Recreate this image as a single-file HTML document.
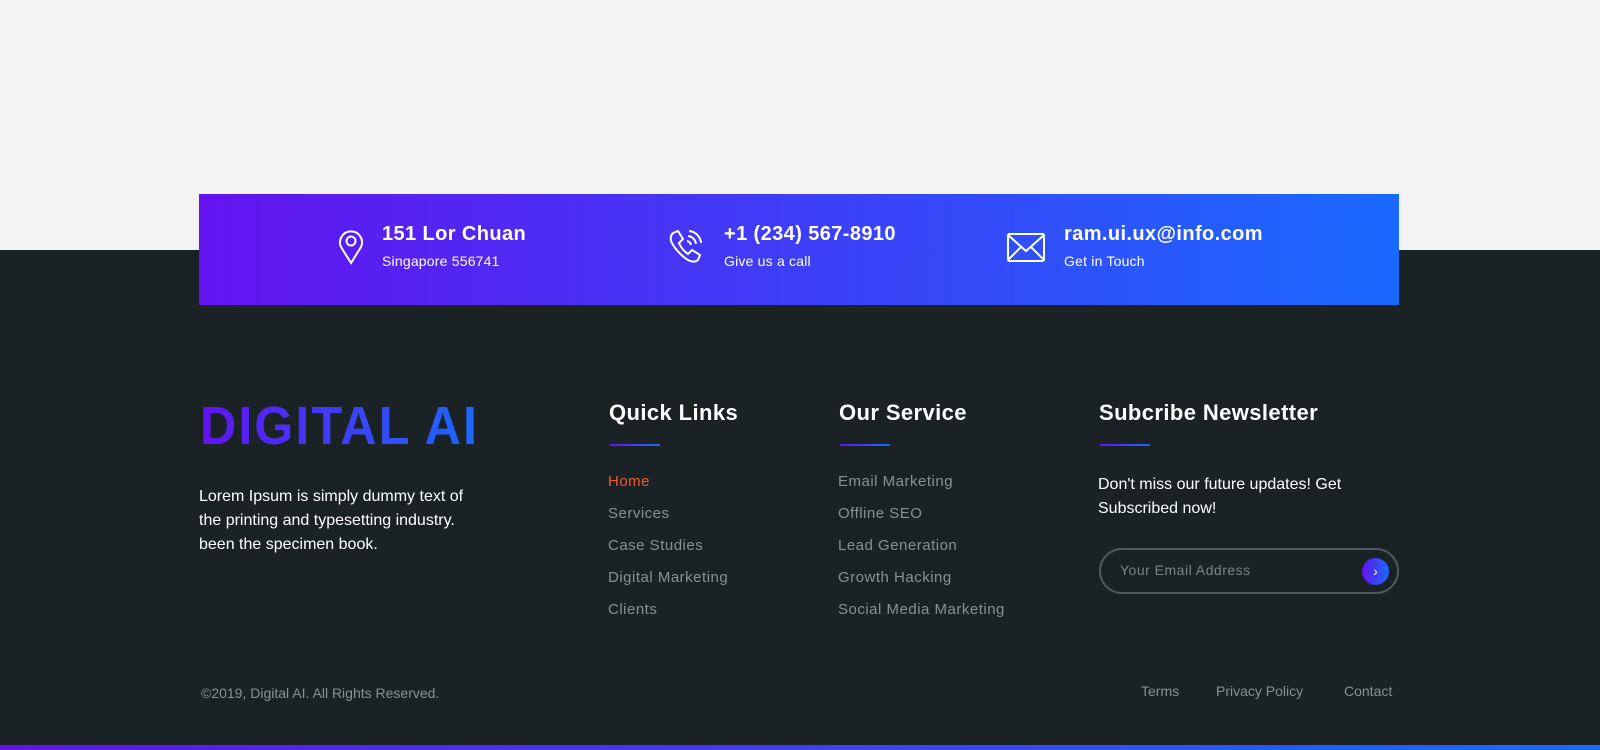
<!DOCTYPE html>
<html><head><style>
*{margin:0;padding:0;box-sizing:border-box}
body{width:1600px;height:750px;position:relative;overflow:hidden;background:#1b2226;font-family:"Liberation Sans",sans-serif}
.top{position:absolute;left:0;top:0;width:1600px;height:250px;background:#f3f3f3}
.banner{position:absolute;left:199px;top:194px;width:1200px;height:111px;background:linear-gradient(90deg,#6213ef,#1a69fe)}
.abs{position:absolute;white-space:nowrap}
.bt{color:#fff;font-weight:bold;font-size:20px;letter-spacing:0.4px}
.bs{color:#fff;font-size:14px;letter-spacing:0.2px}
h3{position:absolute;color:#fff;font-size:22px;font-weight:bold;white-space:nowrap;letter-spacing:0.4px}
.ul{position:absolute;width:50px;height:2px;background:linear-gradient(90deg,#6213ef,#1a69fe)}
.lk{position:absolute;font-size:15px;color:#8a8f93;white-space:nowrap;letter-spacing:0.5px}
.p{position:absolute;color:#fff;font-size:16px;line-height:24px}
</style></head><body>
<div class="top"></div>
<div class="banner"></div>
<svg class="abs" style="left:337px;top:229px" width="28" height="36" viewBox="0 0 28 36" fill="none" stroke="#fff" stroke-width="2"><path d="M14 34 L4 18 A11 11 0 1 1 24 18 Z"/><circle cx="14" cy="12" r="4.5"/></svg>
<div class="abs bt" style="left:382px;top:223px">151 Lor Chuan</div>
<div class="abs bs" style="left:382px;top:253px">Singapore 556741</div>
<svg class="abs" style="left:667px;top:229px" width="38" height="36" viewBox="0 0 38 36" fill="none" stroke="#fff" stroke-width="2"><path d="M6 4 L11 2 L16 10 L12 14 Q15 21 21 25 L25 21 L33 26 L31 31 Q26 35 18 29 Q8 21 4 12 Q3 7 6 4 Z"/><path d="M20 12 A5 5 0 0 1 24 16"/><path d="M21 7 A9 9 0 0 1 29 15"/><path d="M22 2 A13 13 0 0 1 34 14"/></svg>
<div class="abs bt" style="left:724px;top:223px">+1 (234) 567-8910</div>
<div class="abs bs" style="left:724px;top:253px">Give us a call</div>
<svg class="abs" style="left:1006px;top:232px" width="40" height="32" viewBox="0 0 40 32" fill="none" stroke="#fff" stroke-width="2"><rect x="2" y="2" width="36" height="27" rx="1.5"/><path d="M2 3 L20 19 L38 3 M2 28 L15 15 M38 28 L25 15"/></svg>
<div class="abs bt" style="left:1064px;top:223px">ram.ui.ux@info.com</div>
<div class="abs bs" style="left:1064px;top:253px">Get in Touch</div>

<div class="abs" style="left:200px;top:398px;font-size:54px;font-weight:bold;letter-spacing:2.2px;line-height:56px;transform:scaleX(0.93);transform-origin:left;background:linear-gradient(90deg,#6213ef,#1a69fe);-webkit-background-clip:text;background-clip:text;color:transparent">DIGITAL AI</div>
<div class="p" style="left:199px;top:485px;width:287px">Lorem Ipsum is simply dummy text of the printing and typesetting industry. been the specimen book.</div>

<h3 style="left:609px;top:400px">Quick Links</h3><div class="ul" style="left:610px;top:444px"></div>
<h3 style="left:839px;top:400px">Our Service</h3><div class="ul" style="left:840px;top:444px"></div>
<h3 style="left:1099px;top:400px">Subcribe Newsletter</h3><div class="ul" style="left:1100px;top:444px"></div>

<div class="lk" style="left:608px;top:473px;color:#f05a28">Home</div>
<div class="lk" style="left:608px;top:505px">Services</div>
<div class="lk" style="left:608px;top:537px">Case Studies</div>
<div class="lk" style="left:608px;top:569px">Digital Marketing</div>
<div class="lk" style="left:608px;top:601px">Clients</div>
<div class="lk" style="left:838px;top:473px">Email Marketing</div>
<div class="lk" style="left:838px;top:505px">Offline SEO</div>
<div class="lk" style="left:838px;top:537px">Lead Generation</div>
<div class="lk" style="left:838px;top:569px">Growth Hacking</div>
<div class="lk" style="left:838px;top:601px">Social Media Marketing</div>

<div class="p" style="left:1098px;top:473px;width:300px">Don't miss our future updates! Get Subscribed now!</div>
<div class="abs" style="left:1099px;top:548px;width:300px;height:46px;border:2px solid #4f585c;border-radius:23px"></div>
<div class="lk" style="left:1120px;top:562px;font-size:14px;color:#7c8387">Your Email Address</div>
<div class="abs" style="left:1362px;top:558px;width:27px;height:27px;border-radius:50%;background:linear-gradient(90deg,#6213ef,#1a69fe);color:#fff;font-size:14px;text-align:center;line-height:26px">›</div>

<div class="lk" style="left:201px;top:685px;font-size:14px;letter-spacing:0">©2019, Digital AI. All Rights Reserved.</div>
<div class="lk" style="left:1141px;top:683px;font-size:14px;letter-spacing:0">Terms</div>
<div class="lk" style="left:1216px;top:683px;font-size:14px;letter-spacing:0">Privacy Policy</div>
<div class="lk" style="left:1344px;top:683px;font-size:14px;letter-spacing:0">Contact</div>
<div class="abs" style="left:0;top:745px;width:1600px;height:5px;background:linear-gradient(90deg,#6213ef,#1a69fe)"></div>
</body></html>
